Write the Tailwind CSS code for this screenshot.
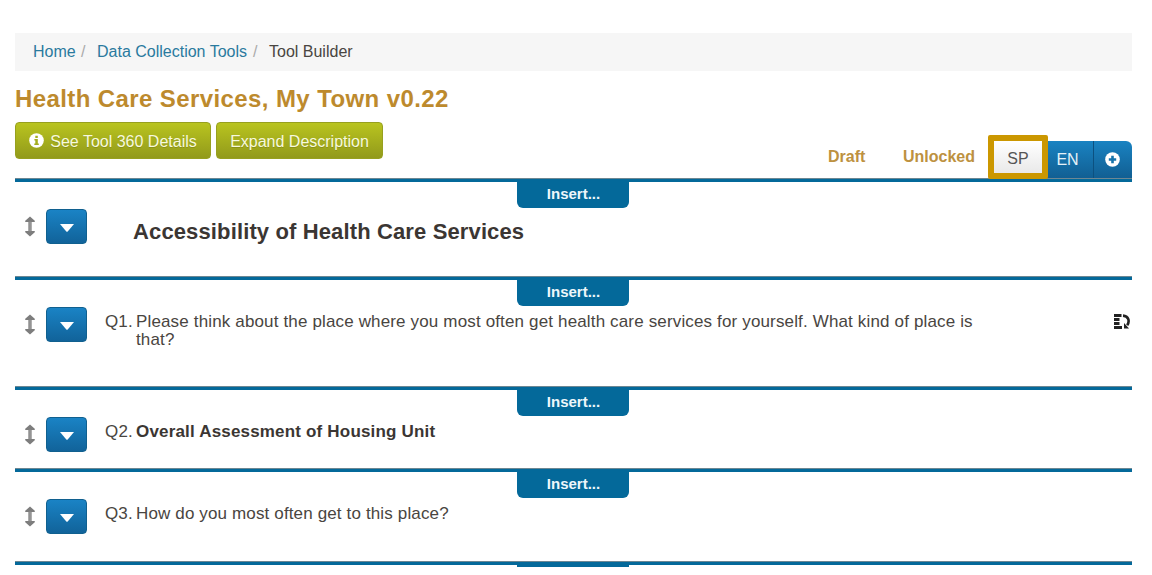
<!DOCTYPE html>
<html lang="en">
<head>
  <meta charset="UTF-8">
  <title>Tool Builder</title>
  <script src="https://cdn.jsdelivr.net/npm/@tailwindcss/browser@4"></script>
</head>
<body class="bg-white h-[575px] overflow-hidden font-['Liberation_Sans',Arial,sans-serif] text-base text-[#494541]">
  <!-- Shared icons -->
  <svg class="hidden">
    <symbol id="move" viewBox="0 0 12 22">
      <path fill="currentColor" d="M6 0.500 11 5v1.400H7.700v9.200H11V17L6 21.500 1 17v-1.400h3.300V6.400H1V5z"/>
      <path fill="#b0b0b0" d="M5.600 6h.9v10h-.9z"/>
    </symbol>
    <symbol id="caret" viewBox="0 0 14 8">
      <path fill="currentColor" d="M0 0h14L7.700 7.500q-.7.600-1.400 0z"/>
    </symbol>
  </svg>

  <div class="ml-[15px] w-[1117px] h-[567px] overflow-hidden pt-[33px]">
    <!-- Breadcrumb -->
    <nav class="flex h-[38px] items-center bg-[#f6f6f6] pl-[18px] pb-px">
      <a class="w-[48px] text-[#2a7a9e]">Home</a>
      <span class="w-[16px] text-[#aaa]">/</span>
      <a class="w-[156px] text-[#2a7a9e] whitespace-nowrap">Data Collection Tools</a>
      <span class="w-[16px] text-[#aaa]">/</span>
      <span>Tool Builder</span>
    </nav>

    <h1 class="mt-3 h-8 text-2xl leading-8 font-bold tracking-[0.4px] text-[#bd8a2d]">Health Care Services, My Town v0.22</h1>

    <!-- Toolbar -->
    <div class="flex h-[63px] justify-between">
      <div class="flex gap-[5px] pt-[7px] text-[#f7f9dd]">
        <button class="flex h-[37px] w-[196px] items-center justify-center gap-[6px] rounded border border-[#97a01f] bg-linear-to-b from-[#b9c41f] to-[#929a1b] pt-[2px] text-shadow-2xs">
          <svg class="-mt-[2px] size-[15px]" viewBox="0 0 15 15">
            <circle cx="7.500" cy="7.500" r="7.300" fill="#fff"/>
            <path fill="#a4ad1e" d="M6.300 2.800h2.500V5H6.300zM5.400 6h3.400v4.500h1v1.500H5.300v-1.500h1V7.500h-.9z"/>
          </svg>
          See Tool 360 Details
        </button>
        <button class="h-[37px] w-[167px] rounded border border-[#97a01f] bg-linear-to-b from-[#b9c41f] to-[#929a1b] pt-[2px] text-shadow-2xs">Expand Description</button>
      </div>
      <div class="flex items-end font-bold text-[#bd9140]">
        <span class="mb-[9px] w-[75px]">Draft</span>
        <span class="mb-[9px] w-[85px]">Unlocked</span>
        <button class="relative z-10 -mr-px -mb-px h-[44px] w-[60px] rounded-xs border-6 border-[#cb9700] bg-linear-to-b from-white to-[#e9e9e9] pt-[4px] font-normal text-[#555]">SP</button>
        <button class="h-[37px] w-[46px] bg-linear-to-b from-[#1a83c2] to-[#115f93] pr-[5px] font-normal text-[#e5f1f8]">EN</button>
        <button class="flex h-[37px] w-[39px] items-center justify-center rounded-tr-md border-l border-[#0c5180] bg-linear-to-b from-[#1a83c2] to-[#115f93] pr-[2px]">
          <svg class="size-[15px]" viewBox="0 0 15 15">
            <circle cx="7.500" cy="7.500" r="7.300" fill="#fff"/>
            <path fill="#1673ab" d="M6.200 3.800h2.600v2.400h2.400v2.600H8.800v2.400H6.200V8.800H3.800V6.200h2.400z"/>
          </svg>
        </button>
      </div>
    </div>

    <!-- Section heading -->
    <section class="relative h-[98px] border-t border-[#6d8793]">
      <div class="h-[3px] bg-[#04699a]"></div>
      <div class="absolute top-0 left-[502px] h-[29px] w-[112px] rounded-b-md bg-[#04699a] pt-[5px] pl-px text-center text-[15px] leading-5 font-bold text-[#eef7fb]">Insert...</div>
      <div class="flex pt-[27px]">
        <svg class="mt-[7px] ml-[9px] h-[21px] w-3 text-[#7d7d7d]"><use href="#move"/></svg>
        <button class="ml-[10px] flex h-[35px] w-[41px] items-center justify-center rounded border border-[#10608f] bg-linear-to-b from-[#1a83c5] to-[#11639a] pt-[2px] text-white"><svg class="h-2 w-[14px]"><use href="#caret"/></svg></button>
        <h2 class="mt-[9px] ml-[46px] text-[22px] leading-7 font-bold tracking-[0.13px] text-[#3b3633]">Accessibility of Health Care Services</h2>
      </div>
    </section>

    <!-- Q1 -->
    <section class="relative h-[110px] border-t border-[#6d8793]">
      <div class="h-[3px] bg-[#04699a]"></div>
      <div class="absolute top-0 left-[502px] h-[29px] w-[112px] rounded-b-md bg-[#04699a] pt-[5px] pl-px text-center text-[15px] leading-5 font-bold text-[#eef7fb]">Insert...</div>
      <div class="flex pt-[27px] text-[17px] leading-[18px] tracking-[0.15px]">
        <svg class="mt-[7px] ml-[9px] h-[21px] w-3 text-[#7d7d7d]"><use href="#move"/></svg>
        <button class="ml-[10px] flex h-[35px] w-[41px] items-center justify-center rounded border border-[#10608f] bg-linear-to-b from-[#1a83c5] to-[#11639a] pt-[2px] text-white"><svg class="h-2 w-[14px]"><use href="#caret"/></svg></button>
        <span class="mt-[6px] ml-[18px] w-[31px]">Q1.</span>
        <p class="mt-[6px] w-[860px]">Please think about the place where you most often get health care services for yourself. What kind of place is<br>that?</p>
        <svg class="mt-[7px] ml-[118px] h-[15px] w-4 shrink-0" viewBox="0 0 16 15">
          <path fill="#222" d="M0 0h7.500v3H0zM0 4h5.500v3H0zM0 8h5.500v3H0zM0 12h8v3H0z"/>
          <path fill="none" stroke="#222" stroke-width="2.600" d="M9 1.600c5.500.4 7 5.500 4.200 9.600"/>
          <path fill="#222" d="M10 9v5.500h5z"/>
        </svg>
      </div>
    </section>

    <!-- Q2 -->
    <section class="relative h-[82px] border-t border-[#6d8793]">
      <div class="h-[3px] bg-[#04699a]"></div>
      <div class="absolute top-0 left-[502px] h-[29px] w-[112px] rounded-b-md bg-[#04699a] pt-[5px] pl-px text-center text-[15px] leading-5 font-bold text-[#eef7fb]">Insert...</div>
      <div class="flex pt-[27px] text-[17px] leading-[18px] tracking-[0.18px]">
        <svg class="mt-[7px] ml-[9px] h-[21px] w-3 text-[#7d7d7d]"><use href="#move"/></svg>
        <button class="ml-[10px] flex h-[35px] w-[41px] items-center justify-center rounded border border-[#10608f] bg-linear-to-b from-[#1a83c5] to-[#11639a] pt-[2px] text-white"><svg class="h-2 w-[14px]"><use href="#caret"/></svg></button>
        <span class="mt-[6px] ml-[18px] w-[31px]">Q2.</span>
        <p class="mt-[6px] font-bold text-[#3b3633]">Overall Assessment of Housing Unit</p>
      </div>
    </section>

    <!-- Q3 -->
    <section class="relative h-[93px] border-t border-[#6d8793]">
      <div class="h-[3px] bg-[#04699a]"></div>
      <div class="absolute top-0 left-[502px] h-[29px] w-[112px] rounded-b-md bg-[#04699a] pt-[5px] pl-px text-center text-[15px] leading-5 font-bold text-[#eef7fb]">Insert...</div>
      <div class="flex pt-[27px] text-[17px] leading-[18px] tracking-[0.14px]">
        <svg class="mt-[7px] ml-[9px] h-[21px] w-3 text-[#7d7d7d]"><use href="#move"/></svg>
        <button class="ml-[10px] flex h-[35px] w-[41px] items-center justify-center rounded border border-[#10608f] bg-linear-to-b from-[#1a83c5] to-[#11639a] pt-[2px] text-white"><svg class="h-2 w-[14px]"><use href="#caret"/></svg></button>
        <span class="mt-[6px] ml-[18px] w-[31px]">Q3.</span>
        <p class="mt-[6px]">How do you most often get to this place?</p>
      </div>
    </section>

    <!-- Next row, cut off at the bottom -->
    <section class="relative border-t border-[#6d8793]">
      <div class="h-[3px] bg-[#04699a]"></div>
      <div class="absolute top-0 left-[502px] h-[29px] w-[112px] rounded-b-md bg-[#04699a]"></div>
    </section>
  </div>
</body>
</html>
